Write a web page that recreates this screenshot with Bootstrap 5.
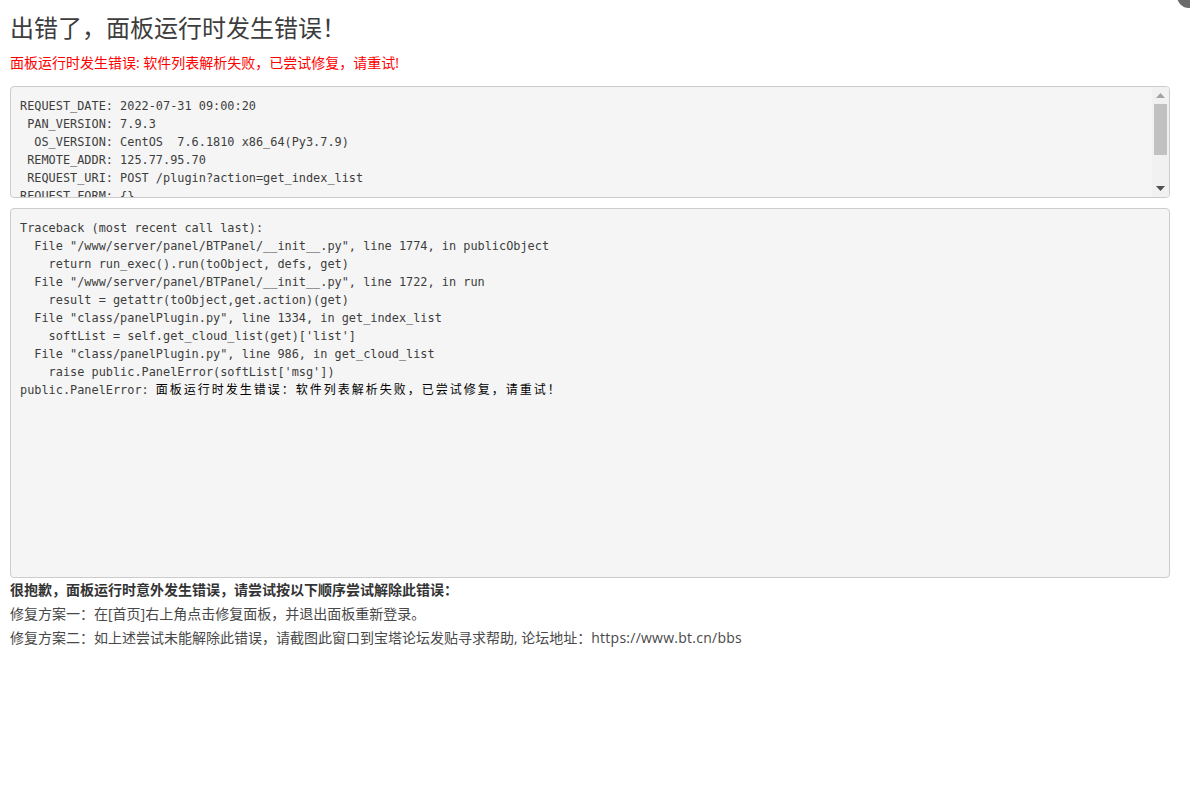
<!DOCTYPE html>
<html lang="zh-CN">
<head>
<meta charset="utf-8">
<title>出错了</title>
<link href="https://cdn.jsdelivr.net/npm/bootstrap@5.3.0/dist/css/bootstrap.min.css" rel="stylesheet">
<style>
html, body { background: #fff; overflow: hidden; }
body { font-family: "Open Sans", "Liberation Sans", "Noto Sans CJK SC", sans-serif; font-size: 14px; line-height: 20px; color: #333; padding: 0 20px 0 10px; height: 798px; }
.err-title { font-family: "Liberation Sans", "Noto Sans CJK SC", sans-serif; font-size: 24px; line-height: 26px; font-weight: 400; color: #3d3d3d; margin: 16px 0 0; padding: 0; }
.err-msg { color: #f00; font-size: 14px; line-height: 20px; margin: 11px 0 0; }
.err-pre { font-family: "DejaVu Sans Mono", "Noto Sans CJK SC", monospace; font-size: 11.88px; line-height: 18px; background: #f5f5f5; color: #3d3d3d; border: 1px solid #ccc; border-radius: 4px; padding: 9.5px 9px; margin: 0; white-space: pre; overflow: hidden; }
.err-top-wrap { margin-top: 13px; }
.err-top { height: 112px; }
.err-main { height: 370px; margin-top: 10px; }
.err-cjk { color: #000; letter-spacing: 2px; font-size: 12px; }
.fake-scroll { position: absolute; top: 1px; right: 1px; bottom: 1px; width: 17px; background: #f1f1f1; border-radius: 0 3px 3px 0; }
.fake-btn { height: 17px; display: block; }
.fake-thumb { height: 51px; margin: 0 2px 0 2px; background: #c1c1c1; }
.fake-down { position: absolute; left: 0; bottom: 0; }
.err-notes { margin-top: 2px; }
.err-notes p { margin: 0 0 4px; font-size: 14px; line-height: 20px; color: #484848; }
.err-notes .err-lead { font-weight: 700; color: #333; }
.err-url { letter-spacing: .25px; }
.corner-badge { position: absolute; top: -16px; right: -11px; width: 24px; height: 24px; border-radius: 50%; background: #6b6b6b; }
.corner-badge svg { position: absolute; left: 0; top: 0; }
</style>
</head>
<body>
<div class="corner-badge"><svg width="24" height="24" viewBox="0 0 24 24"><path d="M17 20l-2 -4" stroke="#fff" stroke-width="1.6" fill="none"/></svg></div>
<h1 class="err-title">出错了，面板运行时发生错误！</h1>
<p class="err-msg">面板运行时发生错误: 软件列表解析失败，已尝试修复，请重试!</p>
<div class="err-top-wrap position-relative">
<pre class="err-pre err-top">REQUEST_DATE: 2022-07-31 09:00:20
 PAN_VERSION: 7.9.3
  OS_VERSION: CentOS  7.6.1810 x86_64(Py3.7.9)
 REMOTE_ADDR: 125.77.95.70
 REQUEST_URI: POST /plugin?action=get_index_list
REQUEST_FORM: {}</pre>
<div class="fake-scroll">
<svg class="fake-btn" width="17" height="17" viewBox="0 0 17 17"><polygon points="4,11 13,11 8.5,6" fill="#a3a3a3"/></svg>
<div class="fake-thumb"></div>
<svg class="fake-btn fake-down" width="17" height="17" viewBox="0 0 17 17"><polygon points="4,6 13,6 8.5,11" fill="#505050"/></svg>
</div>
</div>
<pre class="err-pre err-main">Traceback (most recent call last):
  File "/www/server/panel/BTPanel/__init__.py", line 1774, in publicObject
    return run_exec().run(toObject, defs, get)
  File "/www/server/panel/BTPanel/__init__.py", line 1722, in run
    result = getattr(toObject,get.action)(get)
  File "class/panelPlugin.py", line 1334, in get_index_list
    softList = self.get_cloud_list(get)['list']
  File "class/panelPlugin.py", line 986, in get_cloud_list
    raise public.PanelError(softList['msg'])
public.PanelError: <span class="err-cjk">面板运行时发生错误：软件列表解析失败，已尝试修复，请重试！</span></pre>
<div class="err-notes">
<p class="err-lead">很抱歉，面板运行时意外发生错误，请尝试按以下顺序尝试解除此错误：</p>
<p>修复方案一：在[首页]右上角点击修复面板，并退出面板重新登录。</p>
<p>修复方案二：如上述尝试未能解除此错误，请截图此窗口到宝塔论坛发贴寻求帮助, 论坛地址：<span class="err-url">https://www.bt.cn/bbs</span></p>
</div>
<script src="https://cdn.jsdelivr.net/npm/bootstrap@5.3.0/dist/js/bootstrap.bundle.min.js"></script>
</body>
</html>
